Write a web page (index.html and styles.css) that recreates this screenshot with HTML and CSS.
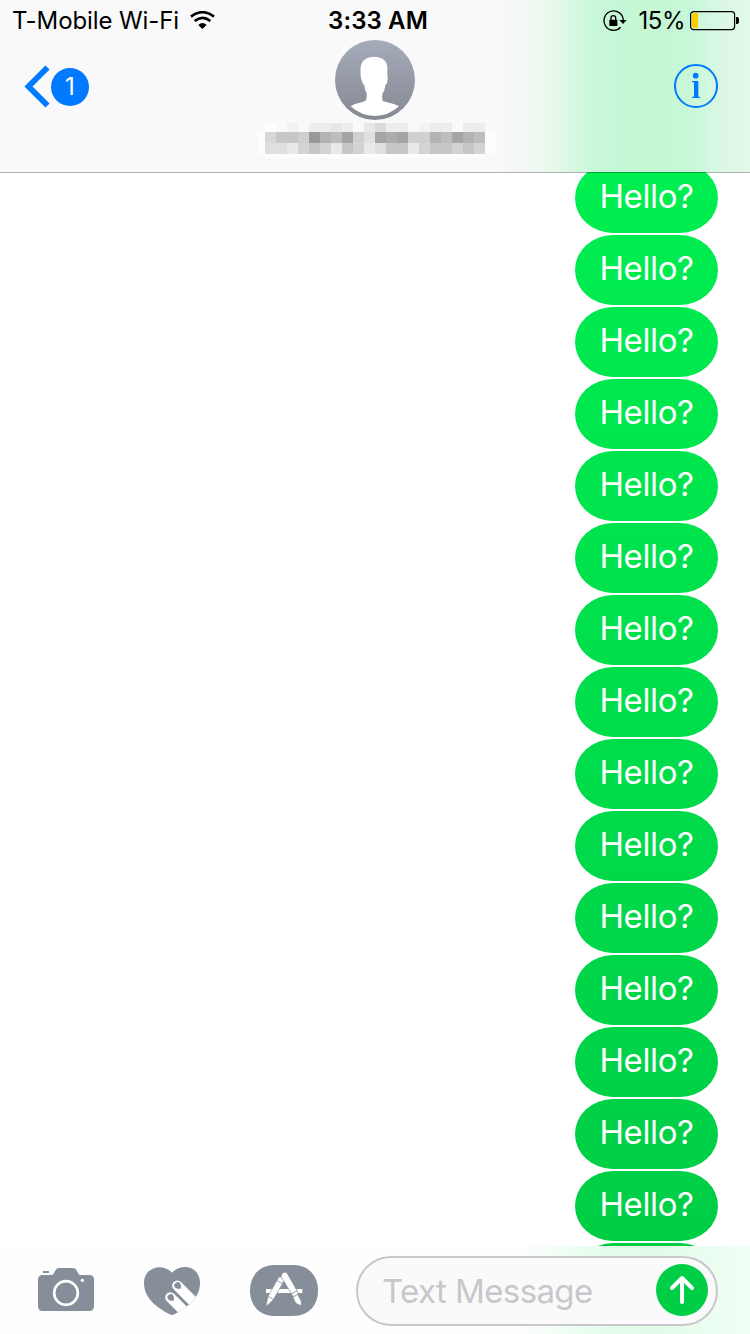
FILE: index.html
```html
<!DOCTYPE html>
<html lang="en">
<head>
  <meta charset="UTF-8">
  <meta name="viewport" content="width=device-width, initial-scale=1.0">
  <title>Messages</title>
  <link rel="stylesheet" href="styles.css">
</head>
<body>
<div class="phone">
  <header class="header">
    <div class="status-bar">
      <div class="carrier">
        <span class="carrier-name">T-Mobile Wi-Fi</span>
        <svg width="25" height="18" viewBox="570 33 75 54">
          <path d="M573 50Q607 23 642 50" fill="none" stroke="#000" stroke-width="8"/>
          <path d="M584 63Q607 44 631 63" fill="none" stroke="#000" stroke-width="8"/>
          <path d="M595 75Q607 63 620 75L607 87Z"/>
        </svg>
      </div>
      <span class="time">3:33 AM</span>
      <div class="indicators">
        <svg class="lock" width="24" height="22" viewBox="308 27 72 66">
          <path d="M369 57A29 29 0 1 0 361 79" fill="none" stroke="#000" stroke-width="4"/>
          <path d="M357 57h22l-11 12z"/>
          <rect x="327" y="56" width="24" height="19" rx="1"/>
          <path d="M332 57v-6a7 7 0 0 1 14 0v6" fill="none" stroke="#000" stroke-width="4"/>
        </svg>
        <span class="percent">15%</span>
        <svg class="battery" width="50" height="20" viewBox="0 0 50 20">
          <rect x=".6" y=".6" width="44" height="18" rx="3" fill="none" stroke="#000" stroke-width="1.200"/>
          <path d="M4 2h4v15H4q-2 0-2-2V4q0-2 2-2z" fill="#fc0"/>
          <path d="M46 6h1q2 0 2 2v3q0 2-2 2h-1z"/>
        </svg>
      </div>
    </div>
    <div class="nav">
      <a class="back" href="#">
        <svg width="26" height="43" viewBox="0 0 26 43">
          <path d="M23.500 2.500L4.500 21.500L23.500 40.500" fill="none" stroke="#007aff" stroke-width="5.800"/>
        </svg>
        <span class="unread">1</span>
      </a>
      <div class="contact">
        <svg class="avatar" width="80" height="80" viewBox="255 120 240 240">
          <defs>
            <linearGradient id="avatar-bg" x2="0" y2="1">
              <stop offset="0" stop-color="#a5abb9"/>
              <stop offset="1" stop-color="#858993"/>
            </linearGradient>
          </defs>
          <circle cx="375" cy="240" r="120" fill="url(#avatar-bg)"/>
          <path d="M332 228Q330 206 334 193Q338 181 350 175Q373 165 397 176Q410 184 412 200L412 228Q415 232 412 244Q411 254 406 255Q405 271 398 280Q395 289 398 303Q414 308 431 312Q439 314 447 319Q415 348 375 348Q334 348 302 319Q311 312 327 309Q338 306 347 302Q352 290 350 279Q344 270 343 255Q338 253 336 244Q331 234 332 228Z" fill="#fff"/>
        </svg>
        <!-- pixelated contact name -->
        <svg class="name" width="237" height="35" viewBox="258 123 237 35" shape-rendering="crispEdges">
          <path d="M258 132h237v22H258zM265 154h220v4H265z" fill="#fdfdfd"/>
          <path d="M265 123h11v9h-11z" fill="#fefefe"/>
          <path d="M287 123h11v9h-11z" fill="#f2f2f2"/>
          <path d="M309 123h22v9h-22zM342 123h11v9h-11zM386 123h22v9h-22zM430 123h22v9h-22zM463 123h22v9h-22z" fill="#ededed"/>
          <path d="M331 123h11v9h-11zM364 123h11v9h-11z" fill="#e6e7e6"/>
          <path d="M375 123h11v9h-11z" fill="#dadbda"/>
          <path d="M419 123h11v9h-11z" fill="#f3f3f3"/>
          <path d="M265 132h11v11h-11z" fill="#d8d8d8"/>
          <path d="M276 132h22v11h-22z" fill="#c7c7c7"/>
          <path d="M298 132h11v11h-11zM353 132h11v11h-11zM408 132h22v11h-22z" fill="#d0d0d0"/>
          <path d="M309 132h11v11h-11z" fill="#999"/>
          <path d="M320 132h11v11h-11zM430 132h11v11h-11zM463 132h11v11h-11z" fill="#b3b3b3"/>
          <path d="M331 132h11v11h-11zM441 132h11v11h-11zM474 132h11v11h-11z" fill="#bdbdbd"/>
          <path d="M342 132h11v11h-11zM375 132h11v11h-11zM397 132h11v11h-11zM452 132h11v11h-11z" fill="#a5a5a4"/>
          <path d="M364 132h11v11h-11z" fill="#e0e0de"/>
          <path d="M386 132h11v11h-11z" fill="#adadad"/>
          <path d="M265 143h22v11h-22zM375 143h11v11h-11z" fill="#dfdfdf"/>
          <path d="M287 143h11v11h-11zM331 143h11v11h-11zM364 143h11v11h-11zM408 143h11v11h-11z" fill="#e9e9e9"/>
          <path d="M298 143h11v11h-11zM320 143h11v11h-11zM353 143h11v11h-11zM419 143h11v11h-11zM452 143h11v11h-11zM474 143h11v11h-11z" fill="#d3d3d3"/>
          <path d="M309 143h11v11h-11zM342 143h11v11h-11zM386 143h22v11h-22zM430 143h22v11h-22zM463 143h11v11h-11z" fill="#c6c6c6"/>
        </svg>
      </div>
      <a class="info" href="#">
        <svg width="44" height="44" viewBox="522 192 132 132">
          <circle cx="588" cy="258" r="63" fill="none" stroke="#007aff" stroke-width="6"/>
          <circle cx="587" cy="227" r="8.500" fill="#007aff"/>
          <path d="M576 243h19v47h5v4h-24v-4h6v-43h-6z" fill="#007aff"/>
        </svg>
      </a>
    </div>
  </header>

  <main class="thread">
    <div class="bubble">Hello?</div>
    <div class="bubble">Hello?</div>
    <div class="bubble">Hello?</div>
    <div class="bubble">Hello?</div>
    <div class="bubble">Hello?</div>
    <div class="bubble">Hello?</div>
    <div class="bubble">Hello?</div>
    <div class="bubble">Hello?</div>
    <div class="bubble">Hello?</div>
    <div class="bubble">Hello?</div>
    <div class="bubble">Hello?</div>
    <div class="bubble">Hello?</div>
    <div class="bubble">Hello?</div>
    <div class="bubble">Hello?</div>
    <div class="bubble">Hello?</div>
    <div class="bubble"></div>
  </main>

  <footer class="composer">
    <svg class="camera" width="56" height="43" viewBox="54 54 168 129">
      <path d="M68 75H96Q101 73 105 64Q109 54 118 54H158Q167 54 171 64Q175 73 180 75H208Q222 75 222 89V169Q222 183 208 183H68Q54 183 54 169V89Q54 75 68 75Z" fill="#868e99"/>
      <rect x="69" y="63" width="18" height="6" rx="1" fill="#868e99"/>
      <circle cx="138" cy="129" r="35.500" fill="none" stroke="#fff" stroke-width="8"/>
      <circle cx="187" cy="91" r="5" fill="#fff"/>
    </svg>
    <svg class="heart" width="56" height="48" viewBox="42 50 168 144">
      <defs>
        <clipPath id="heart-shape">
          <path d="M126 67C98 36 42 50 42 98C42 145 82 172 119 192Q126 196 133 192C170 172 210 145 210 98C210 48 155 36 126 67Z"/>
        </clipPath>
      </defs>
      <g clip-path="url(#heart-shape)">
        <path d="M42 50h168v144H42z" fill="#868e99"/>
        <path d="M121 141L181 201M142 106L212 176" fill="none" stroke="#fff" stroke-width="31" stroke-linecap="round"/>
        <path d="M112 138L119 132H128L132 142L131 151H122L113 146Z" fill="#868e99"/>
        <path d="M132 103L139 96H148L153 105L152 115H142L133 110Z" fill="#868e99"/>
      </g>
    </svg>
    <svg class="apps" width="68" height="51" viewBox="45 45 204 153">
      <path d="M121 45H173C222 45 249 78 249 121.500S222 198 173 198H121C72 198 45 165 45 121.500S72 45 121 45Z" fill="#868e99"/>
      <path d="M93 117H202V129H93Z" fill="#fff"/>
      <g fill="#fff" stroke="#868e99" stroke-width="2">
        <path d="M137 81Q144 82 149 89L115 149L95 168L94 164L99 139L130 84Q132 80 137 81Z"/>
        <path d="M141 72Q145 65 153 67L157 71L188 125L190 137L199 154L198 167Q184 162 180 156L172 136L138 79Z"/>
      </g>
      <path d="M127 92L143 101M99 139L115 148M170 131L187 122M174 141L191 132" fill="none" stroke="#868e99" stroke-width="2.500"/>
    </svg>
    <div class="field">
      <span class="placeholder">Text Message</span>
      <button class="send" aria-label="Send">
        <svg width="26" height="30" viewBox="0 0 26 30">
          <path d="M13 27V4M3 13L13 3L23 13" fill="none" stroke="#fff" stroke-width="4" stroke-linecap="round" stroke-linejoin="round"/>
        </svg>
      </button>
    </div>
  </footer>
</div>
</body>
</html>
```

FILE: styles.css
```css
:root {
  --blue: #007aff;
  --bar: #f9f9f9;
  --send: #00ce46;
}

* {
  box-sizing: border-box;
}

body {
  margin: 0;
  font-family: Inter, Roboto, sans-serif;
  color: #000;
  background: #fff;
}

svg {
  display: block;
  flex-shrink: 0;
}

.phone {
  display: flex;
  flex-direction: column;
  width: 750px;
  height: 1334px;
  overflow: hidden;
}

.header {
  z-index: 1;
  height: 173px;
  flex-shrink: 0;
  margin-bottom: -1px;
  border-bottom: 1px solid rgba(0, 0, 0, 0.3);
  background: linear-gradient(90deg, var(--bar) 490px, #f4f8f5 525px, #e6f8ea 556px, #cdf8db 585px, #c5f8d8 610px, #c5f7d2 645px, #c7f7d8 690px, #dcf8e6 725px, #e3f8e9 750px);
  background-clip: padding-box;
}

.status-bar {
  display: grid;
  grid-template-columns: 1fr auto 1fr;
  align-items: center;
  height: 40px;
  padding: 1px 10px 0 12px;
  font-size: 24px;
  line-height: 40px;
}

.carrier,
.indicators {
  display: flex;
  align-items: center;
}

.carrier {
  gap: 11px;
}

.carrier svg {
  margin-top: -2px;
}

.carrier-name {
  letter-spacing: -0.1px;
}

.time {
  padding-left: 4px;
  font-weight: 600;
  letter-spacing: 0.1px;
}

.indicators {
  justify-content: flex-end;
}

.lock {
  margin: -1px 12px 0 0;
}

.percent {
  margin-right: 5px;
  letter-spacing: -0.5px;
}

.nav {
  display: grid;
  grid-template-columns: 1fr auto 1fr;
  padding: 0 32px 0 24px;
}

.back {
  display: flex;
  align-items: center;
  height: 43px;
  margin-top: 25px;
  gap: 1px;
  text-decoration: none;
}

.unread {
  width: 38px;
  height: 38px;
  border-radius: 50%;
  background: var(--blue);
  color: #fff;
  font-size: 24px;
  line-height: 38px;
  text-align: center;
}

.contact {
  display: flex;
  flex-direction: column;
  align-items: center;
  gap: 3px;
  margin-left: 10px;
}

.avatar {
  margin-right: 3px;
}

.info {
  justify-self: end;
  margin-top: 24px;
}

.thread {
  display: flex;
  flex: 1;
  flex-direction: column;
  justify-content: flex-end;
  align-items: flex-end;
  gap: 2px;
  min-height: 0;
  padding-right: 32px;
  margin-bottom: -67px;
  overflow: hidden;
}

.bubble {
  flex-shrink: 0;
  width: 143px;
  height: 70px;
  border-radius: 38px / 35px;
  background: linear-gradient(#00ee50 173px, #00cd46 1246px) fixed;
  color: #fff;
  font-size: 33px;
  font-weight: 400;
  line-height: 67px;
  text-align: center;
  letter-spacing: -0.4px;
}

.composer {
  display: flex;
  align-items: center;
  flex-shrink: 0;
  z-index: 1;
  height: 88px;
  padding: 2px 32px 0 38px;
  background: linear-gradient(90deg, #fefefe 510px, #f3fef6 560px, #e2fce9 610px, #e0fce7 660px, #eafdf0 705px, #f2fef6 750px);
}

.camera {
  margin-top: -3px;
}

.heart {
  margin-left: 50px;
}

.apps {
  margin: -2px 0 0 50px;
}

.field {
  display: flex;
  justify-content: space-between;
  align-items: center;
  width: 362px;
  height: 70px;
  margin-left: 38px;
  padding: 0 8px 2px 24px;
  border: 2px solid #c7c7cc;
  border-radius: 35px;
  background: #fafafa;
}

.placeholder {
  padding-top: 2px;
  color: #c7c7cc;
  font-size: 33px;
  letter-spacing: -0.6px;
}

.send {
  display: flex;
  justify-content: center;
  align-items: center;
  width: 52px;
  height: 52px;
  padding: 0;
  border: 0;
  border-radius: 50%;
  background: var(--send);
}
```
